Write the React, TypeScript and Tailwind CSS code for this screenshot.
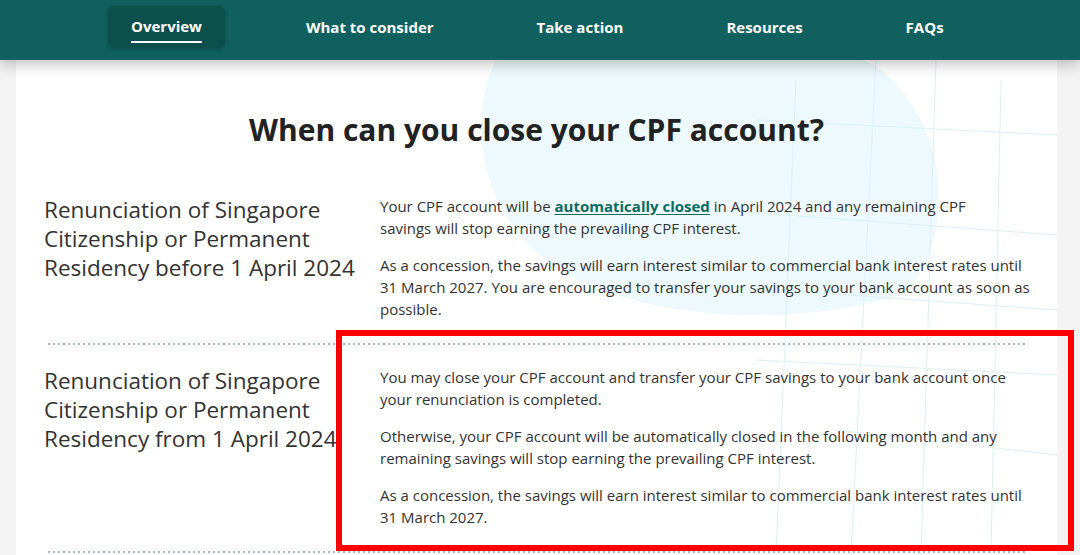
import React from "react";

const navItems = ["Overview", "What to consider", "Take action", "Resources", "FAQs"];

function Dots() {
  return (
    <div className="h-[2px] mx-1 bg-[linear-gradient(to_right,#9fbcbf_2px,transparent_2px)] bg-[length:5px_2px] bg-repeat-x" />
  );
}

function Backdrop() {
  return (
    <svg
      className="absolute left-0 top-0 pointer-events-none"
      width="1041"
      height="495"
      viewBox="0 0 1041 495"
    >
      <path
        d="M480 0 C450 60 465 150 530 200 C610 260 770 270 885 235 C925 205 935 120 905 60 C885 25 865 5 845 0 Z"
        fill="#edf9fc"
      />
      <g stroke="#dcf1f5" strokeWidth="1" fill="none">
        <line x1="860" y1="0" x2="835" y2="495" />
        <line x1="920" y1="0" x2="905" y2="495" />
        <line x1="985" y1="20" x2="975" y2="495" />
        <line x1="780" y1="20" x2="760" y2="495" />
        <line x1="740" y1="60" x2="1041" y2="75" />
        <line x1="700" y1="150" x2="1041" y2="175" />
        <line x1="690" y1="225" x2="1041" y2="250" />
        <line x1="740" y1="300" x2="1041" y2="315" />
        <line x1="820" y1="370" x2="1041" y2="395" />
      </g>
    </svg>
  );
}

function Row({ title, children }: { title: React.ReactNode; children: React.ReactNode }) {
  return (
    <div className="grid grid-cols-[336px_1fr] pt-[21px] pb-[23px]">
      <h3 className="text-[22.5px] leading-[29px] text-[#333] pr-2 font-['Open_Sans',sans-serif]">
        {title}
      </h3>
      <div className="w-[652px] text-[15px] leading-[22px] text-[#333] space-y-[15px] font-['Open_Sans',sans-serif]">
        {children}
      </div>
    </div>
  );
}

export default function App() {
  return (
    <div className="w-[1080px] h-[555px] overflow-hidden bg-[#f3f3f3] font-['Open_Sans',sans-serif]">
      <nav className="relative z-20 h-[60px] bg-[#10605f] flex items-start pt-[6px] gap-[59px] pl-[108px] shadow-[0_4px_14px_rgba(0,0,0,0.25)]">
        {navItems.map((item, i) => (
          <div
            key={item}
            className={
              i === 0
                ? "h-[42px] px-[23px] rounded-md bg-[#0c4f4d] flex items-center shadow-[0_1px_4px_rgba(0,0,0,0.2)]"
                : "h-[42px] px-[22px] flex items-center"
            }
          >
            <span
              className={
                i === 0
                  ? "text-white text-[15px] font-bold border-b-2 border-white pb-[3px] mt-[4px]"
                  : "text-white text-[15px] font-bold"
              }
            >
              {item}
            </span>
          </div>
        ))}
      </nav>

      <div className="relative mx-[16px] w-[1041px] h-[495px] bg-white">
        <Backdrop />
        <div className="relative z-10 px-[28px]">
          <h2 className="pt-[51px] text-center text-[30px] leading-[38px] font-bold text-[#222]">
            When can you close your CPF account?
          </h2>
          <div className="mt-[25px]">
            <Row title="Renunciation of Singapore Citizenship or Permanent Residency before 1 April 2024">
              <p className="max-w-[636px]">
                Your CPF account will be{" "}
                <a className="font-bold text-[#0b6b61] underline underline-offset-2">
                  automatically closed
                </a>{" "}
                in April 2024 and any remaining CPF savings will stop earning the prevailing CPF
                interest.
              </p>
              <p>
                As a concession, the savings will earn interest similar to commercial bank interest
                rates until 31 March 2027. You are encouraged to transfer your savings to your bank
                account as soon as possible.
              </p>
            </Row>
            <Dots />
            <Row title="Renunciation of Singapore Citizenship or Permanent Residency from 1 April 2024">
              <p>
                You may close your CPF account and transfer your CPF savings to your bank account
                once your renunciation is completed.
              </p>
              <p>
                Otherwise, your CPF account will be automatically closed in the following month and
                any remaining savings will stop earning the prevailing CPF interest.
              </p>
              <p>
                As a concession, the savings will earn interest similar to commercial bank interest
                rates until 31 March 2027.
              </p>
            </Row>
            <Dots />
          </div>
        </div>
        <div className="absolute z-20 left-[320px] top-[270px] w-[738px] h-[221px] border-[6px] border-[#ff0000]" />
      </div>
    </div>
  );
}
